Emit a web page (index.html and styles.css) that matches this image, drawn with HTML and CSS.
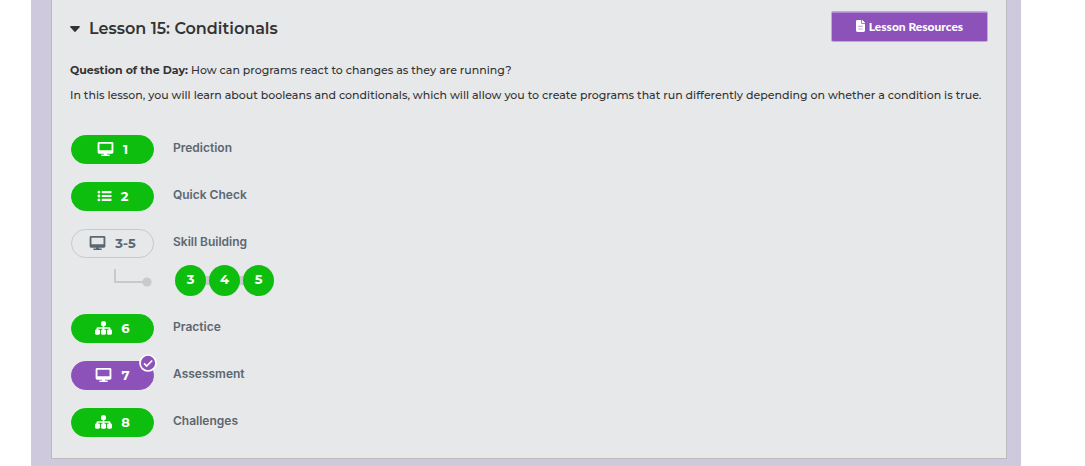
FILE: index.html
```html
<!DOCTYPE html>
<html lang="en">
<head>
<meta charset="utf-8">
<meta name="viewport" content="width=device-width, initial-scale=1">
<title>Lesson 15: Conditionals</title>
<link rel="stylesheet" href="styles.css">
</head>
<body>
<svg class="symbols" aria-hidden="true">
  <symbol id="desktop" viewBox="0 0 576 512"><path d="M528 0H48C21.500 0 0 21.500 0 48v330c0 26.500 21.500 48 48 48h192l-10 28h-78c-13.300 0-24 10.700-24 24s10.700 34 24 34h272c13.300 0 24-20.700 24-34s-10.700-24-24-24h-78l-10-28h192c26.500 0 48-21.500 48-48V48c0-26.500-21.500-48-48-48zm-20 300H68V68h440v232z"/></symbol>
  <symbol id="list" viewBox="0 0 512 512"><path d="M170 72h326q16 0 16 16v48q0 16-16 16H170q-16 0-16-16V88q0-16 16-16zm0 144h326q16 0 16 16v48q0 16-16 16H170q-16 0-16-16v-48q0-16 16-16zm0 144h326q16 0 16 16v48q0 16-16 16H170q-16 0-16-16v-48q0-16 16-16z"/><circle cx="52" cy="112" r="52"/><circle cx="52" cy="256" r="52"/><circle cx="52" cy="400" r="52"/></symbol>
  <symbol id="sitemap" viewBox="0 0 640 512"><path d="M290 150h60v74h184q50 0 50 50v70h-60v-60H350v60h-60v-60H116v60H56v-70q0-50 50-50h184z"/><rect x="226" y="0" width="188" height="180" rx="60"/><rect x="0" y="316" width="190" height="190" rx="50"/><rect x="225" y="316" width="190" height="190" rx="50"/><rect x="450" y="316" width="190" height="190" rx="50"/></symbol>
</svg>
<main class="unit">
  <section class="lesson">
    <header class="lesson-header">
      <h2 class="lesson-title"><svg class="caret" viewBox="0 0 10 6" aria-hidden="true"><path d="M1 0h8q1.500 0 .6 1.200L5.800 5.500q-.8.800-1.600 0L.4 1.200Q-.5 0 1 0z"/></svg>Lesson 15: Conditionals</h2>
      <button class="resources" type="button"><svg class="file-icon" viewBox="0 0 384 512" aria-hidden="true"><path fill-rule="evenodd" d="M224 136V0H60Q0 0 0 60v392q0 60 60 60h264q60 0 60-60V160H248q-24 0-24-24zm160-14v6H256V0h6q10 0 17 7l98 98q7 7 7 17z"/><path fill="#c9a9e2" d="M96 250h192v50H96zm0 110h192v50H96z"/></svg>Lesson Resources</button>
    </header>
    <div class="description">
      <p><strong>Question of the Day:</strong> How can programs react to changes as they are running?</p>
      <p>In this lesson, you will learn about booleans and conditionals, which will allow you to create programs that run differently depending on whether a condition is true.</p>
    </div>
    <ul class="levels">
      <li class="level"><a class="pill done" href="#1"><svg class="icon"><use href="#desktop"/></svg>1</a><a class="label" href="#1">Prediction</a></li>
      <li class="level"><a class="pill done" href="#2"><svg class="icon list"><use href="#list"/></svg>2</a><a class="label" href="#2">Quick Check</a></li>
      <li class="level group">
        <a class="pill" href="#3"><svg class="icon"><use href="#desktop"/></svg>3-5</a><a class="label" href="#3">Skill Building</a>
        <svg class="branch" viewBox="0 0 40 20" aria-hidden="true"><path d="M1 0v13h31" fill="none" stroke="#c6cacd" stroke-width="2"/><circle cx="33" cy="13" r="4.600" fill="#c6cacd"/></svg>
        <div class="bubbles"><a class="bubble" href="#3">3</a><a class="bubble" href="#4">4</a><a class="bubble" href="#5">5</a></div>
      </li>
      <li class="level"><a class="pill done" href="#6"><svg class="icon"><use href="#sitemap"/></svg>6</a><a class="label" href="#6">Practice</a></li>
      <li class="level"><a class="pill assessed" href="#7"><svg class="icon"><use href="#desktop"/></svg>7<svg class="badge" viewBox="0 0 18 18" aria-hidden="true"><circle cx="9" cy="9" r="8" fill="#8c52ba" stroke="#fff" stroke-width="1.700"/><path d="M5 9.300l2.700 2.700 5.500-5.500" fill="none" stroke="#fff" stroke-width="1.700"/></svg></a><a class="label" href="#7">Assessment</a></li>
      <li class="level"><a class="pill done" href="#8"><svg class="icon"><use href="#sitemap"/></svg>8</a><a class="label" href="#8">Challenges</a></li>
    </ul>
  </section>
</main>
</body>
</html>
```
FILE: styles.css
```css
* { box-sizing: border-box; }
body {
  margin: 0;
  padding: 0 64px 0 31px;
  background: #fff;
  color: #333;
  font-family: Montserrat, Metropolis, Inter, "Open Sans", sans-serif;
}
a { color: inherit; text-decoration: none; }
.symbols { display: none; }
.unit { padding: 0 14px 7px 20px; background: #cfc9de; }
.lesson {
  padding: 11px 18px 21px;
  border: 1px solid #bbb;
  border-top: 0;
  background: #e7e8ea;
}
.lesson-header { display: flex; justify-content: space-between; align-items: flex-start; }
.lesson-title {
  display: flex;
  align-items: center;
  gap: 9px;
  margin: 7px 0 0;
  font-size: 16px;
  line-height: 22px;
  font-weight: 600;
}
.caret { width: 10px; height: 6px; fill: #333; }
.resources {
  display: flex;
  align-items: center;
  justify-content: center;
  gap: 4px;
  width: 157px;
  height: 31px;
  padding: 0 0 1px;
  border: 1px solid #b9b1c3;
  border-radius: 2px;
  background: #8c52ba;
  box-shadow: inset 0 1px 0 #b588d8;
  color: #fff;
  font-family: Lato, sans-serif;
  font-size: 12px;
  font-weight: 900;
}
.file-icon { width: 9px; height: 12px; fill: #fff; }
.description { margin-top: 16px; font-size: 11px; line-height: 25px; font-weight: 500; }
.description p { margin: 0; }
.levels {
  display: flex;
  flex-direction: column;
  gap: 18px;
  margin: 27px 0 0;
  padding: 0 0 0 1px;
  list-style: none;
}
.level {
  display: grid;
  grid-template-columns: 83px 1fr;
  column-gap: 19px;
  color: #5b6770;
}
.group { row-gap: 7px; }
.pill {
  position: relative;
  display: flex;
  align-items: center;
  justify-content: center;
  gap: 9px;
  height: 29px;
  padding-bottom: 1px;
  border: 1px solid #c6cacd;
  border-radius: 15px;
  font-size: 13px;
  line-height: 18px;
  font-weight: 700;
}
.done { border-color: #0ebe0e; background: #0ebe0e; color: #fff; }
.assessed { border-color: #8c52ba; background: #8c52ba; color: #fff; }
.icon { width: 17px; height: 14px; fill: currentColor; }
.list { width: 15px; }
.badge { position: absolute; top: -8px; right: -4px; width: 18px; height: 18px; }
.label { justify-self: start; font-family: Inter, sans-serif; font-size: 12px; line-height: 26px; font-weight: 600; }
.branch { justify-self: end; align-self: start; width: 40px; height: 20px; margin-top: 4px; }
.bubbles { display: flex; gap: 3px; padding-left: 2px; background: linear-gradient(#c6cacd, #c6cacd) 20px 11px / 60px 9px no-repeat; }
.bubble {
  width: 31px;
  height: 31px;
  border-radius: 50%;
  background: #0ebe0e;
  color: #fff;
  font-size: 13px;
  font-weight: 700;
  line-height: 28px;
  text-align: center;
}
```
